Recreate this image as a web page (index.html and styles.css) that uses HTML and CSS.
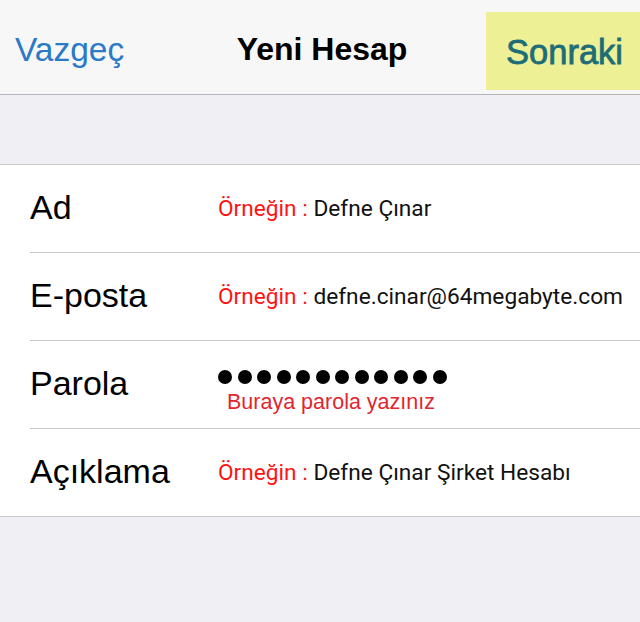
FILE: index.html
```html
<!DOCTYPE html>
<html lang="tr">
<head>
<meta charset="utf-8">
<title>Yeni Hesap</title>
<link rel="stylesheet" href="styles.css">
</head>
<body>
<div class="screen">
  <header class="navbar">
    <span class="nav-btn cancel">Vazgeç</span>
    <h1 class="nav-title">Yeni Hesap</h1>
    <span class="nav-btn next">Sonraki</span>
  </header>

  <div class="spacer"></div>

  <section class="form">
    <div class="row">
      <span class="label">Ad</span>
      <span class="value"><span class="hint">Örneğin :</span> Defne Çınar</span>
    </div>
    <div class="row">
      <span class="label">E-posta</span>
      <span class="value"><span class="hint">Örneğin :</span> defne.cinar@64megabyte.com</span>
    </div>
    <div class="row">
      <span class="label">Parola</span>
      <div class="password">
        <div class="dots">
          <i></i><i></i><i></i><i></i><i></i><i></i><i></i><i></i><i></i><i></i><i></i><i></i>
        </div>
        <span class="pw-note">Buraya parola yazınız</span>
      </div>
    </div>
    <div class="row">
      <span class="label">Açıklama</span>
      <span class="value"><span class="hint">Örneğin :</span> Defne Çınar Şirket Hesabı</span>
    </div>
  </section>
</div>
</body>
</html>
```

FILE: styles.css
```css
html, body {
  margin: 0;
  padding: 0;
}

body {
  background: #efeff4;
  font-family: "Liberation Sans", Arial, sans-serif;
  width: 640px;
  height: 622px;
  overflow: hidden;
}

.screen {
  display: flex;
  flex-direction: column;
}

/* top navigation bar */
.navbar {
  height: 94px;
  background: #f7f7f8;
  border-bottom: 1px solid #b4b4b8;
  display: grid;
  grid-template-columns: 1fr auto 1fr;
  align-items: center;
}

.nav-btn {
  font-size: 33.5px;
}

.cancel {
  color: #2a7ac6;
  padding-left: 15px;
  padding-top: 5px;
  justify-self: start;
}

.nav-title {
  margin: 0;
  font-size: 32px;
  font-weight: bold;
  color: #000;
  padding-top: 5px;
  padding-left: 4px;
}

.next {
  justify-self: end;
  align-self: start;
  margin-top: 12px;
  width: 154px;
  height: 78px;
  box-sizing: border-box;
  background: #eef096;
  color: #1d6d77;
  display: flex;
  align-items: center;
  justify-content: flex-end;
  padding-right: 17px;
  padding-top: 2px;
  font-size: 34.5px;
  -webkit-text-stroke: 0.8px #1d6d77;
}

.spacer {
  height: 69px;
}

/* form table */
.form {
  background: #fff;
  border-top: 1px solid #c8c7cc;
  border-bottom: 1px solid #c8c7cc;
  padding-left: 30px;
}

.row {
  height: 87px;
  display: flex;
  align-items: center;
  border-bottom: 1px solid #c8c7cc;
}

.row:last-child {
  border-bottom: none;
}

.label {
  width: 188px;
  flex: none;
  font-size: 34px;
  color: #000;
  padding-bottom: 2px;
}

.value {
  font-family: "Roboto", sans-serif;
  font-size: 22.7px;
  color: #111;
  white-space: nowrap;
}

.hint {
  color: #ff1414;
}

.password {
  display: flex;
  flex-direction: column;
  padding-top: 16px;
}

.dots {
  display: flex;
  gap: 5.5px;
}

.dots i {
  width: 14px;
  height: 14px;
  border-radius: 50%;
  background: #000;
}

.pw-note {
  font-size: 21.5px;
  color: #e0262f;
  margin-left: 9px;
  margin-top: 6px;
}
```
